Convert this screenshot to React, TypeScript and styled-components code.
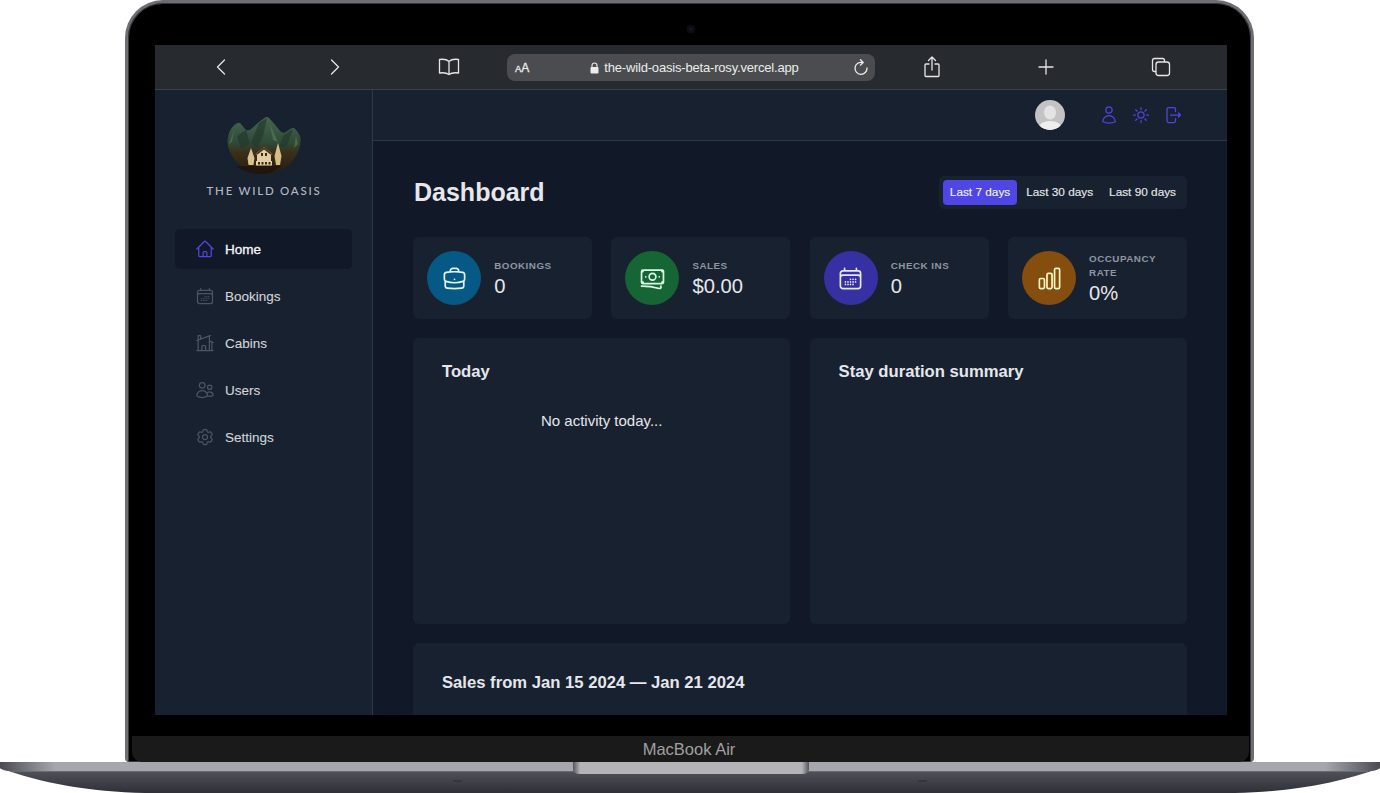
import React from 'react';
import styled, { createGlobalStyle } from 'styled-components';
import {
    HiOutlineBanknotes,
    HiOutlineBriefcase,
    HiOutlineCalendarDays,
    HiOutlineChartBar,
    HiOutlineCog6Tooth,
    HiOutlineHome,
    HiOutlineHomeModern,
    HiOutlineSun,
    HiOutlineUser,
    HiOutlineUsers,
} from 'react-icons/hi2';

const GlobalStyle = createGlobalStyle`
    html, body {
        margin: 0;
        padding: 0;
        background: #fff;
        overflow: hidden;
    }
    * {
        box-sizing: border-box;
    }
    body {
        font-family: "Liberation Sans", Arial, sans-serif;
    }
`;

const Page = styled.div`
    width: 1380px;
    height: 793px;
    display: flex;
    flex-direction: column;
    overflow: hidden;
`;

const Lid = styled.div`
    width: 1129px;
    height: 762px;
    margin-left: 125px;
    padding: 0 23px 0 27px;
    background: #000;
    border: solid #6d6d72;
    border-width: 3px 3px 0 3px;
    border-radius: 38px 38px 4px 4px;
    box-shadow: inset 0 0 0 1px #38383c;
    display: flex;
    flex-direction: column;
`;

const CameraRow = styled.div`
    height: 42px;
    flex-shrink: 0;
    padding-top: 22px;
    display: flex;
    justify-content: center;
`;

const Camera = styled.div`
    width: 8px;
    height: 8px;
    margin-left: -2px;
    border-radius: 50%;
    background: #15161d;
    box-shadow: inset 0 0 0 2px #0b0b10;
`;

const Screen = styled.div`
    width: 1072px;
    height: 670px;
    flex-shrink: 0;
    background: #111827;
    display: flex;
    flex-direction: column;
    overflow: hidden;
`;

const Chin = styled.div`
    height: 26px;
    margin: 21px -21px 0 -23px;
    padding: 1px 3px 0 0;
    background: #1a1a1a;
    border-radius: 0 0 10px 10px;
    color: #a0a0a0;
    font-size: 16.5px;
    display: flex;
    align-items: center;
    justify-content: center;
`;

const BaseDrawing = styled.svg`
    display: block;
    flex-shrink: 0;
`;

const BrowserBar = styled.div`
    height: 45px;
    flex-shrink: 0;
    padding: 0 10px 0 9px;
    background: #272b30;
    border-bottom: 1px solid #3d4248;
    display: flex;
    align-items: center;
    color: #e6e6e6;
`;

const BarSlot = styled.div`
    width: 114px;
    display: flex;
    justify-content: center;
    align-items: center;

    &:last-child {
        padding-left: 2px;
    }
`;

const UrlBar = styled.div`
    width: 368px;
    height: 27px;
    margin: 1px 0 0 1px;
    padding: 0 6px 0 8px;
    background: #4a4c50;
    border-radius: 8px;
    display: flex;
    align-items: center;
    color: #ececec;
`;

const TextSize = styled.span`
    width: 16px;
    font-size: 12px;
    -webkit-text-stroke: 0.3px;
    white-space: nowrap;

    small {
        font-size: 9.5px;
    }
`;

const Address = styled.div`
    flex: 1;
    display: flex;
    justify-content: center;
    align-items: center;
    gap: 5px;
    padding-left: 5px;
    font-size: 13px;
    letter-spacing: -0.18px;
    white-space: nowrap;
`;

const AppLayout = styled.div`
    flex: 1;
    min-height: 0;
    display: grid;
    grid-template-columns: 218px 1fr;
`;

const Sidebar = styled.aside`
    background: #18212f;
    border-right: 1px solid #2d3848;
    padding: 26px 20px 0;
`;

const Logo = styled.div`
    height: 113px;
    display: flex;
    flex-direction: column;
    align-items: center;
`;

const LogoName = styled.span`
    margin: 8px 0 0 1px;
    font-family: Lato, sans-serif;
    font-size: 11.5px;
    font-weight: 500;
    line-height: 14px;
    letter-spacing: 1.75px;
    color: #b4b9c2;
    white-space: nowrap;
`;

const NavList = styled.nav`
    display: flex;
    flex-direction: column;
    gap: 7px;
`;

const NavItem = styled.a<{ $active?: boolean }>`
    height: 40px;
    padding: 0 20px;
    display: flex;
    align-items: center;
    gap: 10px;
    border-radius: 5px;
    font-size: 13.5px;
    -webkit-text-stroke: ${(p) => (p.$active ? '0.35px' : '0.1px')};
    color: ${(p) => (p.$active ? '#f3f4f6' : '#d1d5db')};
    background: ${(p) => (p.$active ? '#111827' : 'transparent')};

    svg {
        width: 20px;
        height: 20px;
        color: ${(p) => (p.$active ? '#4f46e5' : '#4b5563')};
        -webkit-text-stroke: 0;
    }
`;

const Content = styled.div`
    min-width: 0;
    display: flex;
    flex-direction: column;
`;

const Header = styled.header`
    height: 51px;
    flex-shrink: 0;
    padding-right: 43px;
    background: #18212f;
    border-bottom: 1px solid #2d3848;
    display: flex;
    justify-content: flex-end;
    align-items: center;
`;

const Avatar = styled.svg`
    margin-right: 34px;
    border-radius: 50%;
`;

const HeaderIcons = styled.div`
    display: flex;
    gap: 13px;
    color: #4f46e5;

    svg {
        display: block;
        width: 20px;
        height: 20px;
    }

    svg:first-child {
        margin-right: -1px;
    }
`;

const Main = styled.main`
    flex: 1;
    min-height: 0;
    padding: 35px 40px 0;
    display: flex;
    flex-direction: column;
    overflow: hidden;
`;

const TitleRow = styled.div`
    height: 33px;
    flex-shrink: 0;
    margin-bottom: 28px;
    display: flex;
    justify-content: space-between;
    align-items: center;
`;

const Title = styled.h1`
    margin: 0 0 0 1px;
    font-size: 25px;
    font-weight: 700;
    color: #e5e7eb;
`;

const Filter = styled.div`
    height: 33px;
    padding: 4px;
    display: flex;
    gap: 2px;
    background: #18212f;
    border-radius: 5px;
`;

const FilterButton = styled.button<{ $active?: boolean }>`
    border: none;
    padding: 0 7px 2px;
    border-radius: 4px;
    font-family: inherit;
    font-size: 11.8px;
    -webkit-text-stroke: 0.15px;
    color: ${(p) => (p.$active ? '#eef2ff' : '#e5e7eb')};
    background: ${(p) => (p.$active ? '#4f46e5' : 'transparent')};
`;

const StatsGrid = styled.div`
    display: grid;
    grid-template-columns: repeat(4, 1fr);
    gap: 19.2px;
    flex-shrink: 0;
    margin-bottom: 19px;
`;

const StatCard = styled.div`
    height: 82px;
    padding: 0 14.2px;
    display: flex;
    align-items: center;
    gap: 13px;
    background: #18212f;
    border-radius: 6px;
`;

const StatIcon = styled.div<{ $bg: string; $fg: string }>`
    width: 54px;
    height: 54px;
    flex-shrink: 0;
    border-radius: 50%;
    display: flex;
    align-items: center;
    justify-content: center;
    background: ${(p) => p.$bg};
    color: ${(p) => p.$fg};

    svg {
        width: 27px;
        height: 27px;
    }
`;

const StatBody = styled.div`
    min-width: 0;
    padding-top: 2px;
`;

const StatLabel = styled.div`
    font-size: 9.8px;
    line-height: 14px;
    font-weight: 700;
    letter-spacing: 0.5px;
    text-transform: uppercase;
    color: #8f96a3;
`;

const StatValue = styled.div`
    font-size: 20.2px;
    line-height: 27px;
    color: #e5e7eb;
`;

const ChartsGrid = styled.div`
    display: grid;
    grid-template-columns: 1fr 1fr;
    gap: 19.2px;
    flex-shrink: 0;
    margin-bottom: 19px;
`;

const Panel = styled.section`
    height: 286px;
    padding: 24px 29px;
    background: #18212f;
    border-radius: 6px;
`;

const SalesPanel = styled.section`
    height: 300px;
    flex-shrink: 0;
    padding: 30px 29px;
    background: #18212f;
    border-radius: 6px;
`;

const PanelTitle = styled.h2`
    margin: 0;
    font-size: 16.65px;
    line-height: 20px;
    font-weight: 700;
    color: #e5e7eb;
`;

const EmptyNote = styled.p`
    margin: 29px 0 0;
    text-align: center;
    font-size: 15px;
    line-height: 20px;
    color: #e5e7eb;
`;

const stats = [
    { label: 'Bookings', value: '0', bg: '#075985', fg: '#e0f2fe', icon: <HiOutlineBriefcase /> },
    { label: 'Sales', value: '$0.00', bg: '#166534', fg: '#dcfce7', icon: <HiOutlineBanknotes /> },
    { label: 'Check ins', value: '0', bg: '#3730a3', fg: '#e0e7ff', icon: <HiOutlineCalendarDays /> },
    { label: 'Occupancy rate', value: '0%', bg: '#854d0e', fg: '#fef9c3', icon: <HiOutlineChartBar /> },
];

const navLinks = [
    { label: 'Home', icon: <HiOutlineHome />, active: true },
    { label: 'Bookings', icon: <HiOutlineCalendarDays /> },
    { label: 'Cabins', icon: <HiOutlineHomeModern /> },
    { label: 'Users', icon: <HiOutlineUsers /> },
    { label: 'Settings', icon: <HiOutlineCog6Tooth /> },
];

const Stroke = ({ w, h, children }: { w: number; h: number; children: React.ReactNode }) => (
    <svg
        width={w}
        height={h}
        viewBox={`0 0 ${w} ${h}`}
        fill="none"
        stroke="currentColor"
        strokeWidth={1.3}
        strokeLinecap="round"
        strokeLinejoin="round"
    >
        {children}
    </svg>
);

const WildOasisLogo = () => (
    <svg width="76" height="60" viewBox="0 0 76 60">
        <defs>
            <linearGradient id="ground" x1="0" y1="0" x2="0" y2="1">
                <stop offset="0" stopColor="#45664d" />
                <stop offset="0.45" stopColor="#2f4a38" />
                <stop offset="0.62" stopColor="#3a3018" />
                <stop offset="1" stopColor="#2a1c0e" />
            </linearGradient>
        </defs>
        <path
            d="M1.5 25 C2 18 5 11 9 8.5 Q13 5.5 15 8 L20 14 Q23 15 25 13 L33 6 L40 1 Q42 0.5 44 3 L51 11 L55 16 Q59 18 61 15 L66 12 Q68 11 70 14 C73 17 75 21 74.5 25 C74 42 58 58 38 58 C18 58 2 42 1.5 25 Z"
            fill="url(#ground)"
        />
        <path d="M20 14 L24 28 L15 33 L11 20 Z M41 2 L37 20 L31 32 L25 27 L33 7 Z M67 13 L61 30 L53 32 L57 20 Z" fill="#22392e" opacity="0.7" />
        <path d="M44 8 L52 26 L47 24 Z M8 14 L6 26 L3 28 Z M70 20 L68 32 L72 28 Z" fill="#5b7c60" opacity="0.6" />
        <path d="M10 50 C20 58 32 59 44 57 L56 50 Z" fill="#1d130a" opacity="0.7" />
        <path d="M25 32 L28.5 42 L27.5 49 L22.5 49 L21.5 42 Z" fill="#d9c18f" />
        <path d="M52 27 L55.5 40 L54 49 L50 49 L48.5 40 Z" fill="#d6bd88" />
        <path d="M29.5 38 L38 31 L46.5 38 L45 39 L45 45 L31 45 L31 39 Z" fill="#e0cda2" />
        <path d="M38 31 L29 38.5 L31.5 38.5 L38 33.5 L44.5 38.5 L47 38.5 Z" fill="#4a321b" />
        <rect x="35" y="37" width="2" height="3" fill="#3a2814" />
        <rect x="39" y="37" width="2" height="3" fill="#3a2814" />
        <rect x="30" y="45" width="16" height="4.5" fill="#e3d0a6" />
        <path d="M32 46 h2 v2.5 h-2 Z M35.5 46 h2 v2.5 h-2 Z M39 46 h2 v2.5 h-2 Z M42.5 46 h2 v2.5 h-2 Z" fill="#3a2814" />
    </svg>
);

const LogoutIcon = () => (
    <svg viewBox="0 0 20 20" fill="none" stroke="currentColor" strokeWidth="1.25" strokeLinecap="round" strokeLinejoin="round">
        <path d="M11.5 6.5 V4 Q11.5 2.5 10 2.5 H4.5 Q3 2.5 3 4 V16 Q3 17.5 4.5 17.5 H10 Q11.5 17.5 11.5 16 V13.5" />
        <path d="M6.5 10 H16.5 M14.5 8 L16.5 10 L14.5 12" />
    </svg>
);

const AvatarPicture = () => (
    <Avatar width="30" height="30" viewBox="0 0 30 30">
        <rect width="30" height="30" fill="#c3c3c3" />
        <ellipse cx="15" cy="12.5" rx="6" ry="7" fill="#e3e3e3" />
        <ellipse cx="15" cy="27" rx="11" ry="6" fill="#eeeeee" />
    </Avatar>
);

const LaptopBase = () => (
    <BaseDrawing width="1380" height="31" viewBox="0 0 1380 31">
        <defs>
            <linearGradient id="strip" x1="0" y1="0" x2="1" y2="0">
                <stop offset="0" stopColor="#4a4a50" />
                <stop offset="0.04" stopColor="#a6a6ae" />
                <stop offset="0.96" stopColor="#a6a6ae" />
                <stop offset="1" stopColor="#4a4a50" />
            </linearGradient>
            <linearGradient id="body" x1="0" y1="0" x2="0" y2="1">
                <stop offset="0" stopColor="#55555f" />
                <stop offset="0.4" stopColor="#46464f" />
                <stop offset="1" stopColor="#2f2f38" />
            </linearGradient>
            <linearGradient id="notch" x1="0" y1="0" x2="1" y2="0">
                <stop offset="0" stopColor="#55555a" />
                <stop offset="0.03" stopColor="#b3b3b8" />
                <stop offset="0.97" stopColor="#b3b3b8" />
                <stop offset="1" stopColor="#55555a" />
            </linearGradient>
        </defs>
        <path d="M0 6 C40 21 90 30 145 31 H1235 C1290 30 1340 21 1380 6 Z" fill="url(#body)" />
        <path d="M0 0 H1380 V6 Q1378 8 1372 9 H8 Q2 8 0 6 Z" fill="url(#strip)" />
        <rect x="12" y="9" width="1356" height="1" fill="#6a6a72" />
        <path d="M573 0 H809 V7 Q809 12 802 12 H580 Q573 12 573 7 Z" fill="url(#notch)" />
        <rect x="453" y="18" width="9" height="2" rx="1" fill="#36363d" />
        <rect x="918" y="18" width="9" height="2" rx="1" fill="#36363d" />
    </BaseDrawing>
);

const App = () => {
    return (
        <Page>
            <GlobalStyle />
            <Lid>
                <CameraRow>
                    <Camera />
                </CameraRow>
                <Screen>
                    <BrowserBar>
                        <BarSlot>
                            <Stroke w={10} h={16}>
                                <path d="M8.5 1 L1.5 8 L8.5 15" />
                            </Stroke>
                        </BarSlot>
                        <BarSlot>
                            <Stroke w={10} h={16}>
                                <path d="M1.5 1 L8.5 8 L1.5 15" />
                            </Stroke>
                        </BarSlot>
                        <BarSlot>
                            <Stroke w={22} h={18}>
                                <path d="M11 3.5 C9 1.5 5 1 1.5 1.5 V15 C5 14.5 9 15 11 16.5 C13 15 17 14.5 20.5 15 V1.5 C17 1 13 1.5 11 3.5 V16.5" />
                            </Stroke>
                        </BarSlot>
                        <UrlBar>
                            <TextSize>
                                <small>A</small>A
                            </TextSize>
                            <Address>
                                <svg width="9" height="12" viewBox="0 0 9 12">
                                    <path d="M2 5 V3.5 a2.5 2.5 0 0 1 5 0 V5" fill="none" stroke="#ececec" strokeWidth="1.1" />
                                    <rect x="0.5" y="5" width="8" height="6.5" rx="1" fill="#ececec" />
                                </svg>
                                the-wild-oasis-beta-rosy.vercel.app
                            </Address>
                            <Stroke w={16} h={18}>
                                <path d="M9.5 3.5 A6 6 0 1 0 14 9" />
                                <path d="M7.5 0.8 L10.2 3.5 L7.5 6" />
                            </Stroke>
                        </UrlBar>
                        <BarSlot>
                            <Stroke w={18} h={22}>
                                <path d="M9 14 V1.5 M5.5 4.5 L9 1 L12.5 4.5" />
                                <path d="M6 8 H3 Q2 8 2 9 V19.5 Q2 20.5 3 20.5 H15 Q16 20.5 16 19.5 V9 Q16 8 15 8 H12" />
                            </Stroke>
                        </BarSlot>
                        <BarSlot>
                            <Stroke w={16} h={16}>
                                <path d="M8 1 V15 M1 8 H15" />
                            </Stroke>
                        </BarSlot>
                        <BarSlot>
                            <Stroke w={20} h={20}>
                                <path d="M4.5 14.5 H3.5 Q1.5 14.5 1.5 12.5 V3.5 Q1.5 1.5 3.5 1.5 H11.5 Q13.5 1.5 13.5 3.5 V4.5" />
                                <rect x="5" y="5" width="13.5" height="13.5" rx="2.5" />
                            </Stroke>
                        </BarSlot>
                    </BrowserBar>
                    <AppLayout>
                        <Sidebar>
                            <Logo>
                                <WildOasisLogo />
                                <LogoName>THE WILD OASIS</LogoName>
                            </Logo>
                            <NavList>
                                {navLinks.map((link) => (
                                    <NavItem key={link.label} $active={link.active}>
                                        {link.icon}
                                        <span>{link.label}</span>
                                    </NavItem>
                                ))}
                            </NavList>
                        </Sidebar>
                        <Content>
                            <Header>
                                <AvatarPicture />
                                <HeaderIcons>
                                    <HiOutlineUser />
                                    <HiOutlineSun />
                                    <LogoutIcon />
                                </HeaderIcons>
                            </Header>
                            <Main>
                                <TitleRow>
                                    <Title>Dashboard</Title>
                                    <Filter>
                                        <FilterButton $active>Last 7 days</FilterButton>
                                        <FilterButton>Last 30 days</FilterButton>
                                        <FilterButton>Last 90 days</FilterButton>
                                    </Filter>
                                </TitleRow>
                                <StatsGrid>
                                    {stats.map((stat) => (
                                        <StatCard key={stat.label}>
                                            <StatIcon $bg={stat.bg} $fg={stat.fg}>
                                                {stat.icon}
                                            </StatIcon>
                                            <StatBody>
                                                <StatLabel>{stat.label}</StatLabel>
                                                <StatValue>{stat.value}</StatValue>
                                            </StatBody>
                                        </StatCard>
                                    ))}
                                </StatsGrid>
                                <ChartsGrid>
                                    <Panel>
                                        <PanelTitle>Today</PanelTitle>
                                        <EmptyNote>No activity today...</EmptyNote>
                                    </Panel>
                                    <Panel>
                                        <PanelTitle>Stay duration summary</PanelTitle>
                                    </Panel>
                                </ChartsGrid>
                                <SalesPanel>
                                    <PanelTitle>Sales from Jan 15 2024 — Jan 21 2024</PanelTitle>
                                </SalesPanel>
                            </Main>
                        </Content>
                    </AppLayout>
                </Screen>
                <Chin>MacBook Air</Chin>
            </Lid>
            <LaptopBase />
        </Page>
    );
};

export default App;
